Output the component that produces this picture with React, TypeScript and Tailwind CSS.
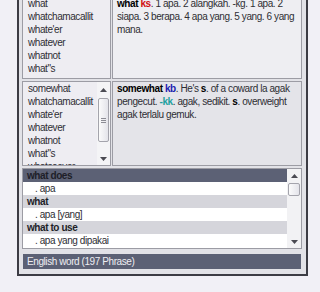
import React from "react";

const topWords = ["what", "whatchamacallit", "whate'er", "whatever", "whatnot", 'what"s'];
const midWords = ["somewhat", "whatchamacallit", "whate'er", "whatever", "whatnot", 'what"s', "whatsoever"];

const phrases = [
  { head: "what does", sub: ". apa", active: true },
  { head: "what", sub: ". apa [yang]", active: false },
  { head: "what to use", sub: ". apa yang dipakai", active: false },
];

function Arrow({ down }: { down?: boolean }) {
  return (
    <svg width="7" height="4" viewBox="0 0 7 4" className={down ? "rotate-180" : ""}>
      <path d="M3.5 0 L7 4 L0 4 Z" fill="#4a4a52" />
    </svg>
  );
}

function Thumb({ h, grip }: { h: string; grip?: boolean }) {
  return (
    <div className={`${h} mx-[1px] rounded-[2px] border border-[#a4a4ac] bg-gradient-to-r from-[#fbfbfb] to-[#e4e4ea] flex flex-col items-center justify-center gap-[1px]`}>
      {grip && (
        <>
          <div className="w-[5px] h-px bg-[#8c8c94]" />
          <div className="w-[5px] h-px bg-[#8c8c94]" />
          <div className="w-[5px] h-px bg-[#8c8c94]" />
        </>
      )}
    </div>
  );
}

export default function App() {
  return (
    <div
      className="w-[320px] h-[292px] overflow-hidden bg-[#f1f0f6] text-[10px] leading-[13px] tracking-[-0.42px] text-[#2e2e34]"
      style={{ fontFamily: '"Liberation Sans", Arial, sans-serif' }}
    >
      <div className="ml-[17px] w-[291px] border-x-2 border-b-2 border-[#3c3c44] bg-[#e2e2e7] pl-[3px] pr-[4px] pb-[5px]">
        {/* top: word list + meaning */}
        <div className="flex gap-px h-[79px]">
          <div className="w-[89px] border-x border-b border-[#9c9ca4] bg-[#eeedf2] overflow-hidden">
            <div className="-mt-[3px] pl-[5px]">
              {topWords.map((w) => (
                <div key={w} className="h-[13px] whitespace-nowrap">{w}</div>
              ))}
            </div>
          </div>
          <div className="flex-1 border-x border-b border-[#9c9ca4] bg-[#eeeef2] overflow-hidden">
            <div className="-mt-[3px] pl-[4px] whitespace-nowrap">
              <div>
                <b className="text-black">what</b> <b className="text-[#d01010]">ks</b>. 1 apa. 2 alangkah. -kg. 1 apa. 2
              </div>
              <div>siapa. 3 berapa. 4 apa yang. 5 yang. 6 yang</div>
              <div>mana.</div>
            </div>
          </div>
        </div>

        {/* middle: word list with scrollbar + meaning */}
        <div className="flex gap-px h-[85px] mt-[2px]">
          <div className="w-[89px] border border-[#9c9ca4] bg-[#eeedf2] overflow-hidden flex">
            <div className="flex-1 h-[83px] pl-[5px] overflow-hidden">
              {midWords.map((w) => (
                <div key={w} className="h-[13px] whitespace-nowrap">{w}</div>
              ))}
            </div>
            <div className="w-[13px] bg-[#f4f4f6] flex flex-col">
              <div className="h-[13px] flex items-center justify-center pt-[2px]"><Arrow /></div>
              <div className="flex-1 pt-[3px]">
                <Thumb h="h-[44px]" grip />
              </div>
              <div className="h-[13px] flex items-center justify-center"><Arrow down /></div>
            </div>
          </div>
          <div className="flex-1 border border-[#9c9ca4] bg-[#e4e4e9] overflow-hidden">
            <div className="pl-[4px] whitespace-nowrap">
              <div>
                <b className="text-black">somewhat</b> <b className="text-[#2020b0]">kb</b>. He's <b className="text-black">s</b>. of a coward la agak
              </div>
              <div>
                pengecut. <b className="text-[#20a0a0]">-kk</b>. agak, sedikit. <b className="text-black">s</b>. overweight
              </div>
              <div>agak terlalu gemuk.</div>
            </div>
          </div>
        </div>

        {/* phrase list */}
        <div className="mt-[2px] h-[81px] border border-[#9c9ca4] bg-white flex overflow-hidden">
          <div className="flex-1">
            {phrases.map((p) => (
              <div key={p.head}>
                <div
                  className={`h-[13px] pl-[4px] font-bold text-[#1e1e28] ${p.active ? "bg-[#5c6175]" : "bg-[#d5d5db]"}`}
                >
                  {p.head}
                </div>
                <div className="h-[13px] pl-[12px] bg-white">{p.sub}</div>
              </div>
            ))}
          </div>
          <div className="w-[14px] bg-[#f2f2f4] flex flex-col">
            <div className="h-[13px] flex items-center justify-center"><Arrow /></div>
            <div className="flex-1 pt-px">
              <Thumb h="h-[13px]" />
            </div>
            <div className="h-[13px] flex items-center justify-center"><Arrow down /></div>
          </div>
        </div>

        {/* status bar */}
        <div className="mt-[5px] mx-px h-[15px] bg-[#5c6175] pl-[4px] leading-[15px] text-[#eeeef2]">
          English word (197 Phrase)
        </div>
      </div>
    </div>
  );
}
